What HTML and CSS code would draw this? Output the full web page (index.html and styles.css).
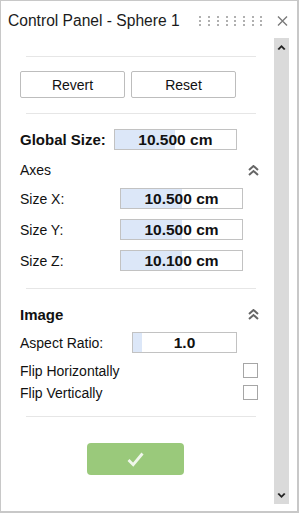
FILE: index.html
```html
<!DOCTYPE html>
<html lang="en">
    <head>
        <meta charset="UTF-8" />
        <title>Control Panel - Sphere 1</title>
        <link rel="stylesheet" href="styles.css">
    </head>
    <body>
        <div class="window">
            <div class="titlebar">
                <span class="title">Control Panel - Sphere 1</span>
                <svg class="grip" width="64" height="10" viewBox="0 0 64 10">
                    <g fill="#b0b0b0">
                        <rect x="0" y="0" width="2" height="2" /><rect x="9" y="0" width="2" height="2" /><rect x="18" y="0" width="2" height="2" /><rect x="27" y="0" width="2" height="2" /><rect x="35" y="0" width="2" height="2" /><rect x="44" y="0" width="2" height="2" /><rect x="53" y="0" width="2" height="2" /><rect x="61" y="0" width="2" height="2" />
                        <rect x="0" y="4" width="2" height="2" /><rect x="9" y="4" width="2" height="2" /><rect x="18" y="4" width="2" height="2" /><rect x="27" y="4" width="2" height="2" /><rect x="35" y="4" width="2" height="2" /><rect x="44" y="4" width="2" height="2" /><rect x="53" y="4" width="2" height="2" /><rect x="61" y="4" width="2" height="2" />
                        <rect x="0" y="8" width="2" height="2" /><rect x="9" y="8" width="2" height="2" /><rect x="18" y="8" width="2" height="2" /><rect x="27" y="8" width="2" height="2" /><rect x="35" y="8" width="2" height="2" /><rect x="44" y="8" width="2" height="2" /><rect x="53" y="8" width="2" height="2" /><rect x="61" y="8" width="2" height="2" />
                    </g>
                </svg>
                <svg class="close" width="11" height="10" viewBox="0 0 11 10">
                    <path d="M1 0.5 L10 9.5 M10 0.5 L1 9.5" stroke="#7a7a7a" stroke-width="1.4" fill="none" />
                </svg>
            </div>
            <div class="main">
                <div class="content">
                    <div class="sep"></div>
                    <div class="btn-row">
                        <button class="btn">Revert</button>
                        <button class="btn">Reset</button>
                    </div>
                    <div class="sep"></div>
                    <div class="field global">
                        <span class="label bold">Global Size:</span>
                        <div class="value" style="width:123px">
                            <div class="fill" style="width:60px"></div>
                            <span>10.500 cm</span>
                        </div>
                    </div>
                    <div class="section">
                        <span class="label">Axes</span>
                        <svg class="chev" width="11" height="11" viewBox="0 0 11 11">
                            <path d="M1 5 L5.5 1 L10 5 M1 10 L5.5 6 L10 10" stroke="#666" stroke-width="2" fill="none" />
                        </svg>
                    </div>
                    <div class="field axis">
                        <span class="label">Size X:</span>
                        <div class="value" style="width:123px">
                            <div class="fill" style="width:61px"></div>
                            <span>10.500 cm</span>
                        </div>
                    </div>
                    <div class="field axis">
                        <span class="label">Size Y:</span>
                        <div class="value" style="width:123px">
                            <div class="fill" style="width:61px"></div>
                            <span>10.500 cm</span>
                        </div>
                    </div>
                    <div class="field axis">
                        <span class="label">Size Z:</span>
                        <div class="value" style="width:123px">
                            <div class="fill" style="width:61px"></div>
                            <span>10.100 cm</span>
                        </div>
                    </div>
                    <div class="sep sep-image"></div>
                    <div class="section image">
                        <span class="label bold">Image</span>
                        <svg class="chev" width="11" height="11" viewBox="0 0 11 11">
                            <path d="M1 5 L5.5 1 L10 5 M1 10 L5.5 6 L10 10" stroke="#666" stroke-width="2" fill="none" />
                        </svg>
                    </div>
                    <div class="field aspect">
                        <span class="label">Aspect Ratio:</span>
                        <div class="value" style="width:105px">
                            <div class="fill" style="width:9px"></div>
                            <span>1.0</span>
                        </div>
                    </div>
                    <div class="check-row">
                        <span class="label">Flip Horizontally</span>
                        <span class="checkbox"></span>
                    </div>
                    <div class="check-row second">
                        <span class="label">Flip Vertically</span>
                        <span class="checkbox"></span>
                    </div>
                    <div class="sep sep-ok"></div>
                    <button class="ok">
                        <svg width="17" height="15" viewBox="0 0 17 15">
                            <path d="M1.5 8 L6.2 12.7 L15.5 1.5" stroke="rgba(255,255,255,0.85)" stroke-width="2.8" fill="none" />
                        </svg>
                    </button>
                </div>
                <div class="scrollbar">
                    <svg width="15" height="15" viewBox="0 0 15 15">
                        <path d="M3.5 10 L7.5 6 L11.5 10 L10 11 L7.5 8.5 L5 11 Z" fill="#222" />
                    </svg>
                    <svg width="15" height="15" viewBox="0 0 15 15">
                        <path d="M3.5 6 L7.5 10 L11.5 6 L10 5 L7.5 7.5 L5 5 Z" fill="#222" />
                    </svg>
                </div>
            </div>
        </div>
    </body>
</html>
```

FILE: styles.css
```css
html {
    background-color: white;
}

body {
    margin: 0;
    font-family: "Liberation Sans", Arial, sans-serif;
    color: #111;
}

.window {
    width: 299px;
    height: 513px;
    box-sizing: border-box;
    border: 1px solid #c8c8c8;
    border-right-width: 2px;
    border-bottom-width: 2px;
    display: flex;
    flex-direction: column;
    background: white;
}

.titlebar {
    height: 37px;
    flex-shrink: 0;
    display: flex;
    align-items: center;
    padding-left: 7px;
    padding-top: 3px;
    box-sizing: border-box;
}

.title {
    font-size: 15.6px;
    color: #1b1b1b;
}

.grip {
    margin-left: 19px;
}

.close {
    margin-left: 14px;
}

.main {
    flex: 1;
    display: flex;
    min-height: 0;
}

.content {
    flex: 1;
    display: flex;
    flex-direction: column;
    padding-left: 19px;
}

.scrollbar {
    width: 15px;
    margin: 0 8px 7px 0;
    background: #dadada;
    display: flex;
    flex-direction: column;
    justify-content: space-between;
    padding: 1px 0;
}

.sep {
    height: 1px;
    background: #e6e6e6;
    width: 230px;
    margin-left: 6px;
    margin-top: 18px;
    flex-shrink: 0;
}

.btn-row {
    display: flex;
    gap: 6px;
    margin-top: 14px;
}

.btn {
    width: 105px;
    height: 27px;
    border: 1px solid #bdbdbd;
    border-radius: 2px;
    background: white;
    font-family: "Liberation Sans", Arial, sans-serif;
    font-size: 14px;
    color: #111;
    padding: 0;
}

.btn-row + .sep {
    margin-top: 15px;
}

.label {
    font-size: 14px;
}

.bold {
    font-weight: bold;
    font-size: 15px;
}

.field {
    display: flex;
    align-items: center;
    height: 21px;
}

.value {
    position: relative;
    height: 21px;
    box-sizing: border-box;
    border: 1px solid #c2c2c2;
    background: white;
    display: flex;
    align-items: center;
    justify-content: center;
    font-weight: bold;
    font-size: 15.5px;
}

.fill {
    position: absolute;
    left: 0;
    top: 0;
    bottom: 0;
    background: #dce7f8;
}

.value span {
    position: relative;
}

.global {
    margin-top: 15px;
}

.global .value {
    margin-left: 8px;
}

.section {
    display: flex;
    align-items: center;
    justify-content: space-between;
    height: 16px;
    margin-top: 12px;
    width: 239px;
}

.axis {
    margin-top: 10px;
}

.axis .value {
    margin-left: auto;
    margin-right: 31px;
}

.sep-image {
    margin-top: 17px;
}

.section.image {
    margin-top: 17px;
}

.aspect {
    margin-top: 10px;
}

.aspect .value {
    margin-left: auto;
    margin-right: 37px;
}

.check-row {
    display: flex;
    align-items: center;
    justify-content: space-between;
    height: 15px;
    margin-top: 10px;
    width: 238px;
}

.check-row.second {
    margin-top: 7px;
}

.checkbox {
    width: 15px;
    height: 15px;
    box-sizing: border-box;
    border: 1px solid #a6a6a6;
    background: white;
}

.sep-ok {
    margin-top: 16px;
}

.ok {
    margin-top: 26px;
    margin-left: 67px;
    width: 97px;
    height: 32px;
    border: none;
    border-radius: 4px;
    background: #9ac97b;
    display: flex;
    align-items: center;
    justify-content: center;
    padding: 0;
}
```
